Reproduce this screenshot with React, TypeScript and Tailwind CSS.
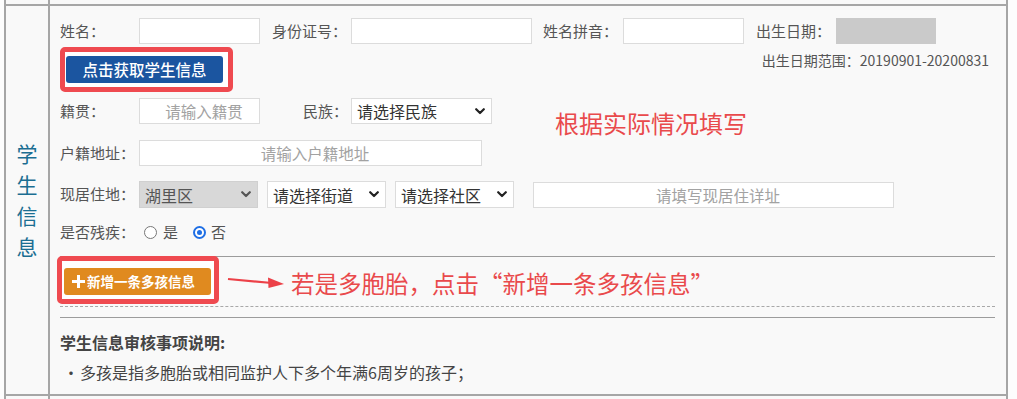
import React from "react";

const line = "border-[#a6a6a6]";

const Label = ({ text, w = "w-[79px]" }: { text: string; w?: string }) => (
  <span className={`${w} shrink-0 text-[15px] text-[#555]`}>{text}</span>
);

const TextBox = ({ w, placeholder }: { w: string; placeholder?: string }) => (
  <input
    className={`${w} h-[26px] shrink-0 border border-[#dcdcdc] bg-white pl-[9px] text-center text-[15.5px] text-[#333] outline-none placeholder:text-[#a2a2a2]`}
    placeholder={placeholder}
    readOnly
  />
);

const Chevron = ({ color = "#222" }: { color?: string }) => (
  <svg width="10" height="7" viewBox="0 0 10 7" className="shrink-0">
    <path d="M1.2 1.2 L5 5 L8.8 1.2" fill="none" stroke={color} strokeWidth="2.2" strokeLinecap="round" strokeLinejoin="round" />
  </svg>
);

const SelectBox = ({ w, text, disabled }: { w: string; text: string; disabled?: boolean }) => (
  <div
    className={`${w} h-full shrink-0 flex items-center justify-between border pl-[5px] pr-[6px] text-[16px] ${
      disabled ? "border-[#d0d0d0] bg-[#d8d8d8] text-[#555]" : "border-[#dcdcdc] bg-white text-[#333]"
    }`}
  >
    <span>{text}</span>
    <Chevron color={disabled ? "#555" : "#222"} />
  </div>
);

const Radio = ({ checked }: { checked?: boolean }) =>
  checked ? (
    <span className="w-[13px] h-[13px] shrink-0 rounded-full border-2 border-[#1f6fe5] bg-white flex items-center justify-center">
      <span className="w-[5px] h-[5px] rounded-full bg-[#1f6fe5]" />
    </span>
  ) : (
    <span className="w-[13px] h-[13px] shrink-0 rounded-full border border-[#777] bg-white" />
  );

export default function App() {
  return (
    <div className="w-[1017px] h-[399px] overflow-hidden bg-[#fdfdfd] font-['Noto_Sans_CJK_SC','Noto_Sans',sans-serif]">
      <div className={`ml-[4px] w-[1004px] border-x-2 ${line} bg-[#f9f9f9]`}>
        {/* tail of the row above */}
        <div className="flex h-[4px]">
          <div className="w-[42px]" />
          <div className={`flex-1 border-l-2 ${line}`} />
        </div>

        <div className={`flex h-[392px] border-y-2 ${line}`}>
          {/* section title */}
          <div className="w-[42px] shrink-0 flex flex-col items-center justify-center text-[21px] leading-[31px] text-[#1b6e92]">
            <span>学</span>
            <span>生</span>
            <span>信</span>
            <span>息</span>
          </div>

          {/* form */}
          <div className={`relative flex-1 flex flex-col border-l-2 ${line} pl-[10px] pr-[11px] pt-[12px]`}>
            <div className="flex items-center h-[26px]">
              <Label text="姓名：" />
              <TextBox w="w-[121px]" />
              <span className="ml-[12px]" />
              <Label text="身份证号：" />
              <TextBox w="w-[181px]" />
              <span className="ml-[11px]" />
              <Label text="姓名拼音：" w="w-[80px]" />
              <TextBox w="w-[121px]" />
              <span className="ml-[12px]" />
              <Label text="出生日期：" w="w-[80px]" />
              <div className="w-[100px] h-[26px] bg-[#cacaca]" />
            </div>

            <div className="mt-[3px] flex items-start justify-between">
              <div className="rounded-[5px] border-[5px] border-[#ef4a50] bg-white pl-[1px] pr-[5px] py-[4px]">
                <button className="w-[157px] h-[27px] rounded-[3px] bg-[#1b55a0] text-[15.5px] font-medium text-white">
                  点击获取学生信息
                </button>
              </div>
              <span className="mt-[3px] mr-[6px] text-[14px] leading-[20px] text-[#555]">
                出生日期范围：20190901-20200831
              </span>
            </div>

            <div className="mt-[6px] flex items-center h-[26px]">
              <Label text="籍贯：" />
              <TextBox w="w-[121px]" placeholder="请输入籍贯" />
              <span className="ml-[43px]" />
              <Label text="民族：" w="w-[48px]" />
              <SelectBox w="w-[141px]" text="请选择民族" />
            </div>

            <div className="mt-[16px] flex items-center h-[26px]">
              <Label text="户籍地址：" />
              <TextBox w="w-[343px]" placeholder="请输入户籍地址" />
            </div>

            <div className="mt-[15px] flex items-center h-[27px]">
              <Label text="现居住地：" />
              <SelectBox w="w-[119px]" text="湖里区" disabled />
              <span className="ml-[9px]" />
              <SelectBox w="w-[119px]" text="请选择街道" />
              <span className="ml-[9px]" />
              <SelectBox w="w-[119px]" text="请选择社区" />
              <span className="ml-[19px]" />
              <TextBox w="w-[361px]" placeholder="请填写现居住详址" />
            </div>

            <div className="mt-[12px] flex items-center h-[24px] text-[15px] text-[#555]">
              <Label text="是否残疾：" />
              <span className="ml-[5px]" />
              <Radio />
              <span className="ml-[6px]">是</span>
              <span className="ml-[15px]" />
              <Radio checked />
              <span className="ml-[5px]">否</span>
            </div>

            <div className="mt-[12px] h-px bg-[#9c9c9c]" />

            <div className="-mt-px flex items-center">
              <div className="-ml-[3px] rounded-[5px] border-[5px] border-[#ef4a50] bg-white pl-[2px] pr-[3px] pt-[7px] pb-[4px]">
                <button className="w-[147px] h-[27px] flex items-center pl-[8px] rounded-[3px] bg-[#e08a1f] text-[13.5px] font-bold text-white">
                  <svg width="13" height="13" viewBox="0 0 13 13" className="mr-[2px] shrink-0">
                    <rect x="5" y="0" width="3" height="13" fill="#fff" />
                    <rect x="0" y="5" width="13" height="3" fill="#fff" />
                  </svg>
                  新增一条多孩信息
                </button>
              </div>
              <svg width="60" height="14" viewBox="0 0 60 14" className="ml-[7px] mt-[4px] shrink-0">
                <line x1="2" y1="4" x2="46" y2="8" stroke="#ec4148" strokeWidth="2.2" />
                <polygon points="58,9 42,2.5 42.5,13" fill="#ec4148" />
              </svg>
              <span className="ml-[5px] mt-[6px] text-[23.5px] leading-[30px] text-[#e94a4c]">
                若是多胞胎，点击“新增一条多孩信息”
              </span>
            </div>

            <div className="mt-[2px] border-t border-dashed border-[#a8a8a8]" />
            <div className="mt-[10px] h-px bg-[#9c9c9c]" />

            <div className="mt-[13px] text-[16px] leading-[22px] font-bold text-[#444]">学生信息审核事项说明:</div>
            <div className="mt-[8px] flex text-[16px] leading-[22px] text-[#444]">
              <span className="ml-[3px] w-[17px]">·</span>
              <span>多孩是指多胞胎或相同监护人下多个年满6周岁的孩子；</span>
            </div>

            <span className="absolute left-[505px] top-[105px] text-[24px] leading-[24px] text-[#e94a4c]">
              根据实际情况填写
            </span>
          </div>
        </div>

        {/* start of the row below */}
        <div className="flex h-[3px]">
          <div className="w-[42px]" />
          <div className={`flex-1 border-l-2 ${line}`} />
        </div>
      </div>
    </div>
  );
}
